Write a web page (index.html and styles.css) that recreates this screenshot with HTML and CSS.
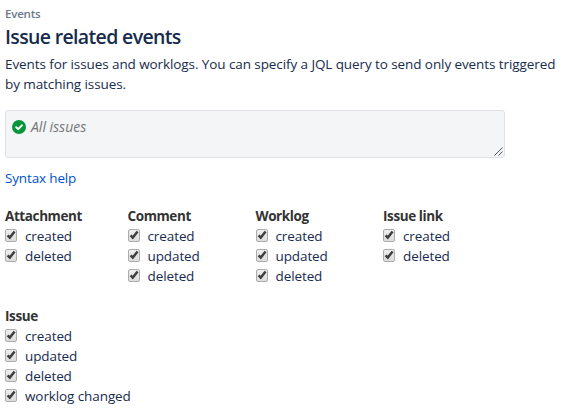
FILE: index.html
```
<!DOCTYPE html>
<html lang="en">
<head>
<meta charset="utf-8">
<title>Issue related events</title>
<link rel="stylesheet" href="styles.css">
</head>
<body>
<svg class="defs" width="0" height="0" aria-hidden="true"><symbol id="tick" viewBox="0 0 12 12"><path d="M2.6 6.3 4.8 8.6 9.6 2.4" fill="none" stroke="#404040" stroke-width="2.5"/></symbol></svg>
<main class="page">
  <div class="eyebrow">Events</div>
  <h1 class="title">Issue related events</h1>
  <p class="intro">Events for issues and worklogs. You can specify a JQL query to send only events triggered<br>by matching issues.</p>
  <div class="query">
    <svg class="valid" width="14" height="14" viewBox="0 0 14 14"><circle cx="7" cy="7" r="7" fill="#07943b"/><path d="M4.2 7.2 6.2 9.1 9.9 5.4" fill="none" stroke="#fff" stroke-width="2" stroke-linecap="round" stroke-linejoin="round"/></svg>
    <span class="placeholder">All issues</span>
    <svg class="grip" width="9" height="9" viewBox="0 0 9 9"><path d="M.5 8.5l8-8M4.5 8.5l4-4" stroke="#555" stroke-width="1"/></svg>
  </div>
  <a class="help">Syntax help</a>
  <div class="groups">
    <section class="group attachment"><h2>Attachment</h2>
      <label><i class="box"><svg><use href="#tick"/></svg></i><span>created</span></label>
      <label><i class="box"><svg><use href="#tick"/></svg></i><span>deleted</span></label></section>
    <section class="group comment"><h2>Comment</h2>
      <label><i class="box"><svg><use href="#tick"/></svg></i><span>created</span></label>
      <label><i class="box"><svg><use href="#tick"/></svg></i><span>updated</span></label>
      <label><i class="box"><svg><use href="#tick"/></svg></i><span>deleted</span></label></section>
    <section class="group worklog"><h2>Worklog</h2>
      <label><i class="box"><svg><use href="#tick"/></svg></i><span>created</span></label>
      <label><i class="box"><svg><use href="#tick"/></svg></i><span>updated</span></label>
      <label><i class="box"><svg><use href="#tick"/></svg></i><span>deleted</span></label></section>
    <section class="group link"><h2>Issue link</h2>
      <label><i class="box"><svg><use href="#tick"/></svg></i><span>created</span></label>
      <label><i class="box"><svg><use href="#tick"/></svg></i><span>deleted</span></label></section>
  </div>
  <section class="group issue"><h2>Issue</h2>
    <label><i class="box"><svg><use href="#tick"/></svg></i><span>created</span></label>
    <label><i class="box"><svg><use href="#tick"/></svg></i><span>updated</span></label>
    <label><i class="box"><svg><use href="#tick"/></svg></i><span>deleted</span></label>
    <label><i class="box"><svg><use href="#tick"/></svg></i><span>worklog changed</span></label></section>
</main>
</body>
</html>
```
FILE: styles.css
```
* { box-sizing: border-box; }
body { margin: 0; background: #fff; overflow: hidden; }
.defs { position: absolute; }
.page {
  padding: 6px 0 0 5px;
  font: 13.5px/20px "Open Sans", "Noto Sans", sans-serif;
  color: #172b4d;
  white-space: nowrap;
}
.eyebrow { font-size: 11.5px; line-height: 16px; font-weight: 600; letter-spacing: -.2px; color: #6b778c; }
.title { margin: 3px 0 5px; font-size: 19.5px; line-height: 24px; font-weight: 600; letter-spacing: -.65px; }
.intro { margin: 0; letter-spacing: -.09px; }
.query {
  position: relative;
  display: flex;
  gap: 5px;
  width: 500px;
  height: 48px;
  margin-top: 16px;
  padding: 6px;
  border: 1px solid #dfe1e6;
  border-radius: 3px;
  background: #f4f5f7;
}
.valid { margin-top: 3px; }
.placeholder { font-size: 14px; font-style: italic; color: #757575; }
.grip { position: absolute; right: 1px; bottom: 1px; }
.help { display: block; margin-top: 10px; letter-spacing: -.15px; color: #0052cc; }
.groups { display: grid; grid-template-columns: 122.5px 128px 127.5px auto; margin-top: 18px; }
.group h2 { margin: 0; font-size: 13.5px; line-height: 20px; font-weight: 700; letter-spacing: -.4px; color: #333; }
.group label { display: flex; height: 20px; letter-spacing: -.1px; }
.box {
  width: 12px;
  height: 13px;
  margin: 3px 8px 0 0;
  border: 1px solid #acacac;
  border-radius: 2px;
  background: linear-gradient(#eee, #ddd);
}
.box svg { display: block; width: 12px; height: 12px; margin: -1px; }
.issue { margin-top: 20px; }
```
